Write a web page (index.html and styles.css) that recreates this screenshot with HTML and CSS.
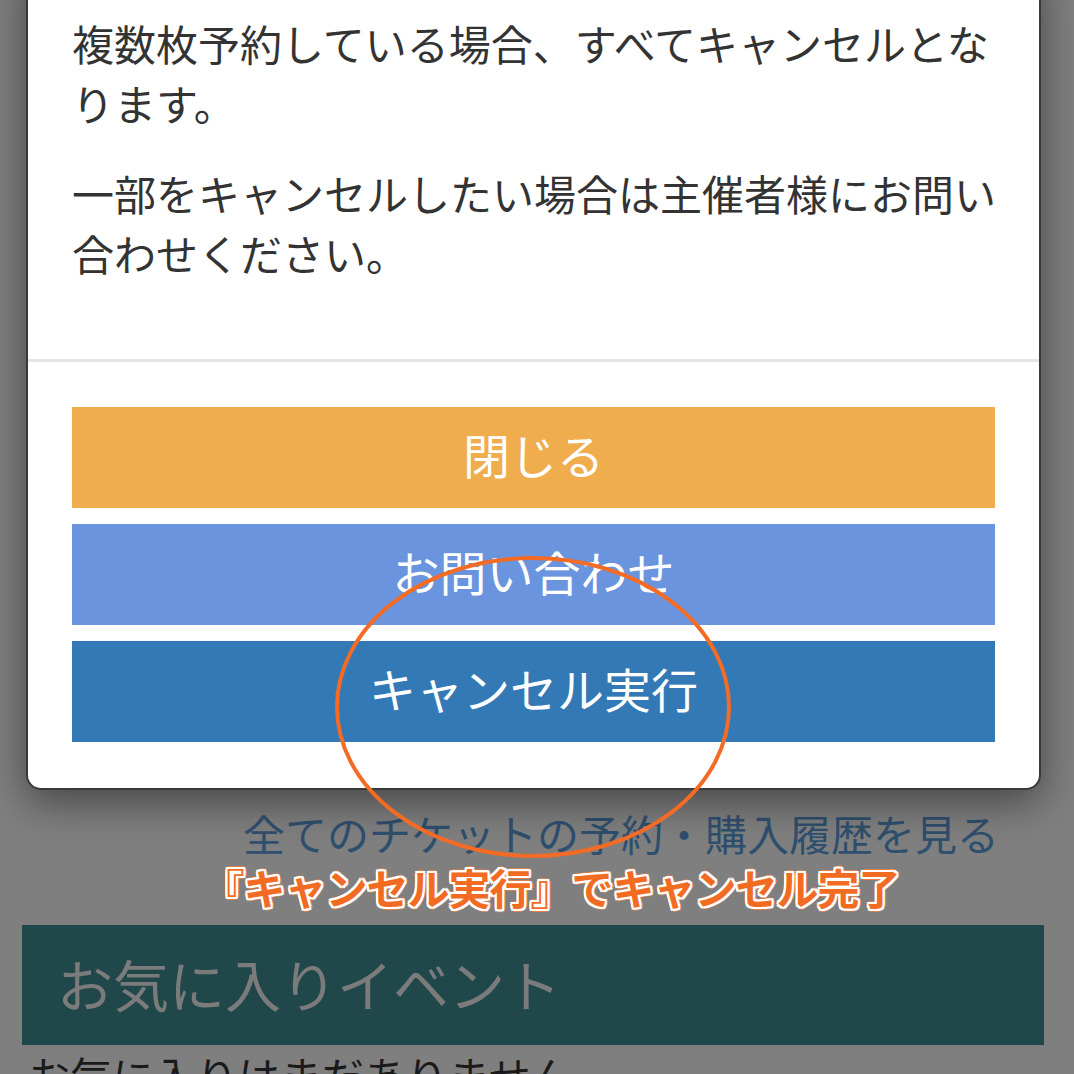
FILE: index.html
```html
<!DOCTYPE html>
<html lang="ja">
<head>
    <meta charset="UTF-8">
    <meta name="viewport" content="width=device-width, initial-scale=1.0">
    <title>マイページ</title>
    <link rel="stylesheet" href="styles.css">
</head>
<body>
    <div class="page">
        <div class="ticket-list"></div>

        <div class="history-link">
            <a href="#">全てのチケットの予約・購入履歴を見る</a>
        </div>
        <div class="note">『キャンセル実行』でキャンセル完了</div>

        <div class="section-head">お気に入りイベント</div>
        <p class="empty">お気に入りはまだありません</p>
    </div>

    <div class="modal">
        <div class="modal-body">
            <p>複数枚予約している場合、すべてキャンセルとなります。</p>
            <p>一部をキャンセルしたい場合は主催者様にお問い合わせください。</p>
        </div>
        <div class="modal-footer">
            <button class="btn btn-close">閉じる</button>
            <button class="btn btn-contact">お問い合わせ</button>
            <button class="btn btn-cancel">キャンセル実行</button>
        </div>
    </div>

    <svg class="mark" width="420" height="320" viewBox="0 0 420 320">
        <ellipse cx="210" cy="160" rx="196" ry="149" fill="none" stroke="#f36b25" stroke-width="4"/>
    </svg>
</body>
</html>
```

FILE: styles.css
```css
body {
    margin: 0;
    background-color: #7f7f7f;
    font-family: "Noto Sans CJK JP", "Noto Sans", sans-serif;
    overflow: hidden;
}
.page {
    padding: 0 30px 0 22px;
}
.ticket-list {
    height: 805px;
}
.history-link {
    text-align: right;
    padding-right: 45px;
    font-size: 42px;
    line-height: 56px;
}
.history-link a {
    color: #2f4f6e;
    text-decoration: none;
}
.note {
    text-align: center;
    padding-left: 36px;
    font-size: 42px;
    line-height: 52px;
    font-weight: bold;
    letter-spacing: -1px;
    color: #f26b22;
    text-shadow:
        2px 0 0 #fff, -2px 0 0 #fff, 0 2px 0 #fff, 0 -2px 0 #fff,
        2px 2px 0 #fff, -2px 2px 0 #fff, 2px -2px 0 #fff, -2px -2px 0 #fff,
        3px 0 0 #e9803f, -3px 0 0 #e9803f, 0 3px 0 #e9803f, 0 -3px 0 #e9803f;
}
.section-head {
    margin-top: 12px;
    height: 120px;
    padding: 0 35px;
    background-color: #20484a;
    color: #7b7b7b;
    font-size: 56px;
    line-height: 116px;
}
.empty {
    margin: 0;
    padding-left: 6px;
    font-size: 42px;
    line-height: 60px;
    color: #1a1a1a;
}

/* modal over the dimmed page */
.modal {
    position: absolute;
    top: -35px;
    left: 26px;
    width: 1011px;
    background-color: #fff;
    border: 2px solid #3a3a3a;
    border-radius: 15px;
    box-shadow: 0 12px 40px rgba(0, 0, 0, 0.45);
}
.modal-body {
    padding: 46px 40px 46px 44px;
    color: #333;
    font-size: 42px;
    line-height: 60px;
}
.modal-body p {
    margin: 0 0 30px;
}
.modal-footer {
    border-top: 3px solid #e5e5e5;
    padding: 45px 44px 46px;
    display: flex;
    flex-direction: column;
    gap: 16px;
}
.btn {
    height: 101px;
    padding: 0 0 8px;
    border: none;
    border-radius: 0;
    color: #fff;
    font-family: inherit;
    font-size: 47px;
}
.btn-close {
    background-color: #efad4e;
}
.btn-contact {
    background-color: #6a94de;
}
.btn-cancel {
    background-color: #3379b6;
}

/* hand-drawn highlight */
.mark {
    position: absolute;
    left: 323px;
    top: 547px;
}
```
